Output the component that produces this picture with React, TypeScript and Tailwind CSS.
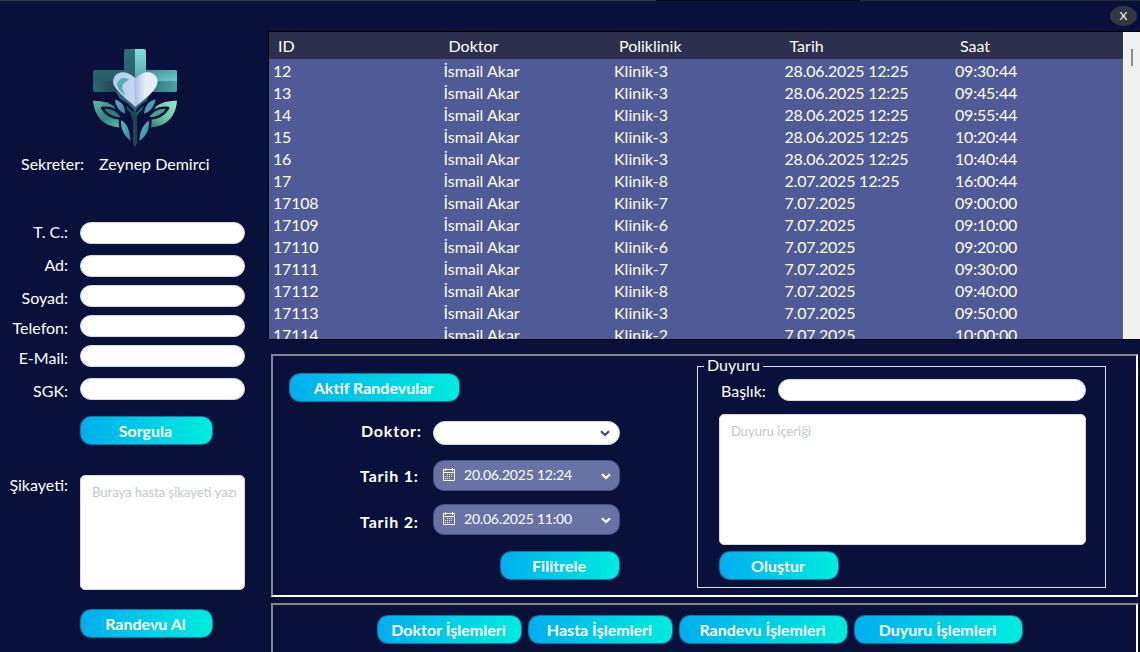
import React from "react";

const rows: string[][] = [
  ["12", "Klinik-3", "28.06.2025 12:25", "09:30:44"],
  ["13", "Klinik-3", "28.06.2025 12:25", "09:45:44"],
  ["14", "Klinik-3", "28.06.2025 12:25", "09:55:44"],
  ["15", "Klinik-3", "28.06.2025 12:25", "10:20:44"],
  ["16", "Klinik-3", "28.06.2025 12:25", "10:40:44"],
  ["17", "Klinik-8", "2.07.2025 12:25", "16:00:44"],
  ["17108", "Klinik-7", "7.07.2025", "09:00:00"],
  ["17109", "Klinik-6", "7.07.2025", "09:10:00"],
  ["17110", "Klinik-6", "7.07.2025", "09:20:00"],
  ["17111", "Klinik-7", "7.07.2025", "09:30:00"],
  ["17112", "Klinik-8", "7.07.2025", "09:40:00"],
  ["17113", "Klinik-3", "7.07.2025", "09:50:00"],
  ["17114", "Klinik-2", "7.07.2025", "10:00:00"],
];

const fields = [
  { label: "T. C.:", row: "", text: "-mt-[2px]" },
  { label: "Ad:", row: "mt-[11px]", text: "-mt-[2px]" },
  { label: "Soyad:", row: "mt-2", text: "mt-[4px]" },
  { label: "Telefon:", row: "mt-2", text: "mt-[4px]" },
  { label: "E-Mail:", row: "mt-2", text: "mt-[4px]" },
  { label: "SGK:", row: "mt-[11px]", text: "mt-[4px]" },
];

function Button({ className, children }: { className: string; children: React.ReactNode }) {
  return (
    <button
      className={`flex h-[29px] shrink-0 items-center justify-center rounded-[11px] border border-[#087a9c] bg-linear-to-r from-[#00adee] to-[#00ecde] bg-origin-border pr-[2px] text-[16px] font-bold whitespace-nowrap text-white ${className}`}
    >
      {children}
    </button>
  );
}

function Logo() {
  return (
    <svg width="110" height="115" viewBox="0 0 330 345" className="block">
      <defs>
        <linearGradient id="crossLeft" x1="0" y1="0" x2="0" y2="1">
          <stop offset="0" stopColor="#2d7078" />
          <stop offset="1" stopColor="#1d4350" />
        </linearGradient>
        <linearGradient id="crossRight" x1="0" y1="0" x2="0" y2="1">
          <stop offset="0" stopColor="#86ded8" />
          <stop offset="0.4" stopColor="#55aab1" />
          <stop offset="1" stopColor="#235663" />
        </linearGradient>
        <linearGradient id="arm" x1="0" y1="0" x2="1" y2="0">
          <stop offset="0" stopColor="#2b6870" />
          <stop offset="1" stopColor="#203e4c" />
        </linearGradient>
        <linearGradient id="armRight" x1="0" y1="0" x2="1" y2="1">
          <stop offset="0" stopColor="#438d98" />
          <stop offset="1" stopColor="#70cec9" />
        </linearGradient>
        <linearGradient id="armRightLow" x1="0" y1="0" x2="1" y2="0">
          <stop offset="0" stopColor="#2c6a75" />
          <stop offset="1" stopColor="#4ba3a8" />
        </linearGradient>
        <linearGradient id="heartFill" x1="0" y1="0" x2="1" y2="0">
          <stop offset="0" stopColor="#b3ccea" />
          <stop offset="0.46" stopColor="#c4d7f1" />
          <stop offset="0.5" stopColor="#acc2df" />
          <stop offset="0.72" stopColor="#e5edfb" />
          <stop offset="1" stopColor="#e5edfb" />
        </linearGradient>
        <linearGradient id="leafLeft" x1="0" y1="0" x2="1" y2="1">
          <stop offset="0" stopColor="#63b8a7" />
          <stop offset="0.5" stopColor="#35847f" />
          <stop offset="1" stopColor="#5ec5ae" />
        </linearGradient>
        <linearGradient id="leafRight" x1="1" y1="0" x2="0" y2="1">
          <stop offset="0" stopColor="#9ae8cc" />
          <stop offset="0.55" stopColor="#69bea2" />
          <stop offset="1" stopColor="#276d70" />
        </linearGradient>
        <linearGradient id="leafBlue" x1="0" y1="0" x2="1" y2="1">
          <stop offset="0" stopColor="#68b9cb" />
          <stop offset="1" stopColor="#367d96" />
        </linearGradient>
      </defs>
      <path d="M132 34q0-7 7-7h26v230l-14-38q-22-20-32-64h-74q-6 0-6-6v-53q0-6 6-6h87z" fill="url(#crossLeft)" />
      <path d="M165 27h26q7 0 7 7v56h86q7 0 7 7v53q0 6-7 6h-75q-14 50-35 65l-9 28z" fill="url(#crossRight)" />
      <path d="M39 123h82v33H45q-6 0-6-6z" fill="url(#arm)" />
      <path d="M198 90h86q7 0 7 7v27h-93z" fill="url(#armRight)" />
      <path d="M198 124h93v26q0 6-7 6h-86z" fill="url(#armRightLow)" />
      <path d="M106 155q24 40 54 55l6 20 7-20q20-12 39-55l-3 0-44 47-48-47z" fill="#2e6572" />
      <path d="M166 201C150 184 111 158 101 134C91 105 129 78 166 115C202 78 241 103 231 134C221 160 184 184 166 201Z" fill="url(#heartFill)" />
      <path d="M148 119C125 104 107 124 113 140Q119 157 137 164Q112 133 148 119Z" fill="#54aeb0" />
      <path d="M39 182Q80 181 105 200Q126 216 132 261Q111 265 85 255Q44 235 39 182Z" fill="url(#leafLeft)" />
      <path d="M291 182Q250 181 226 200Q204 216 198 261Q219 265 245 255Q287 235 291 182Z" fill="url(#leafRight)" />
      <path d="M111 176Q147 191 165 221Q183 191 220 176" fill="none" stroke="#09113a" strokeWidth="7" />
      <path d="M91 212Q151 223 157 305M239 212Q181 223 173 305" fill="none" stroke="#09113a" strokeWidth="8" />
      <g stroke="#09113a" strokeWidth="7" strokeLinejoin="round">
        <path d="M66 204Q106 197 129 236Q88 238 66 204Z" fill="#2f7d7c" />
        <path d="M101 174Q142 182 139 226Q103 216 101 174Z" fill="url(#leafBlue)" />
        <path d="M120 236Q154 247 155 310Q115 281 120 236Z" fill="url(#leafBlue)" />
        <path d="M265 204Q224 197 201 236Q243 238 265 204Z" fill="#4ba095" />
        <path d="M231 174Q191 179 188 226Q225 219 231 174Z" fill="url(#leafBlue)" />
        <path d="M211 236Q176 251 174 309Q214 288 211 236Z" fill="url(#leafBlue)" />
      </g>
      <path d="M159 214H171V310L165 322L159 309Z" fill="#1d4552" />
    </svg>
  );
}

function Chevron({ className }: { className: string }) {
  return (
    <svg width="10" height="7" viewBox="0 0 10 7" fill="none" stroke="currentColor" strokeWidth="2.2" className={className}>
      <path d="M1 1.2L5 5L9 1.2" />
    </svg>
  );
}

function Calendar() {
  return (
    <svg width="12" height="13" viewBox="0 0 12 13" fill="none" stroke="#fff" className="-mt-[2px] shrink-0">
      <path d="M.5 1.5h11v11H.5zM0 4.5h12M2.5 0v3M9.5 0v3" />
      <path d="M4 6.5h6M2 8.5h8M2 10.5h6" strokeDasharray="1 1" />
    </svg>
  );
}

function DatePicker({ value }: { value: string }) {
  return (
    <div className="flex h-[31px] w-[187px] items-center rounded-[11px] border border-[#46518a] bg-[#6872a5] pr-[8px] pl-[9px] text-white">
      <Calendar />
      <span className="-mt-[2px] ml-[9px] text-[14px] leading-[18px] tracking-[-0.2px]">{value}</span>
      <Chevron className="mt-[1px] ml-auto" />
    </div>
  );
}

const bevel = "border-2 border-t-[#85858a] border-l-[#85858a] border-r-white border-b-white";

export default function App() {
  return (
    <div className="flex h-[652px] w-[1140px] flex-col overflow-hidden bg-[#09113a] font-['Lato','Liberation_Sans',sans-serif] text-[16px] leading-[20px] text-white">
      <div className="flex h-px shrink-0 bg-[#343b50]">
        <div className="ml-[656px] w-[204px] bg-[#080910]" />
        <div className="flex-1 bg-[#292b30]" />
      </div>
      <div className="flex min-h-0 flex-1">
        <aside className="flex w-[268px] shrink-0 flex-col pt-[39px]">
          <div className="ml-20">
            <Logo />
          </div>
          <div className="-mt-px flex h-5 pl-[21px] whitespace-nowrap">
            <span className="w-[78px]">Sekreter:</span>
            <span>Zeynep Demirci</span>
          </div>
          <div className="mt-12 flex flex-col">
            {fields.map((f) => (
              <div key={f.label} className={`flex h-[22px] items-center ${f.row}`}>
                <label className={`w-[68px] text-right whitespace-nowrap ${f.text}`}>{f.label}</label>
                <input className="ml-3 h-[22px] w-[165px] rounded-full border border-[#d5dae2] bg-white px-2 text-black" />
              </div>
            ))}
          </div>
          <Button className="mt-[16px] ml-20 w-[133px]">Sorgula</Button>
          <div className="mt-[30px] flex h-[115px]">
            <label className="w-[68px] text-right whitespace-nowrap">Şikayeti:</label>
            <div className="ml-3 w-[165px] overflow-hidden rounded-[5px] border border-[#d5dae2] bg-white px-[11px] pt-[6px] text-[13px] whitespace-nowrap text-[#c1c8d0]">
              Buraya hasta şikayeti yazı
            </div>
          </div>
          <Button className="mt-[19px] ml-20 w-[133px]">Randevu Al</Button>
        </aside>

        <main className="flex w-[872px] shrink-0 flex-col">
          <div className="flex h-[30px] shrink-0 items-center justify-end pr-[3px]">
            <button className="h-[20px] w-[27px] rounded-[50%] bg-[#343842] text-[12px] leading-[20px]">X</button>
          </div>
          <div className="flex h-[309px] shrink-0 border-y border-l border-black">
            <div className="flex w-[854px] shrink-0 flex-col overflow-hidden bg-[#4f5b96]">
              <div className="grid h-[27px] shrink-0 grid-cols-[170.5px_170.5px_170.5px_170.5px_1fr] items-center bg-[#2c304d] pl-[9px]">
                <span>ID</span>
                <span>Doktor</span>
                <span>Poliklinik</span>
                <span>Tarih</span>
                <span>Saat</span>
              </div>
              {rows.map((r) => (
                <div key={r[0]} className="grid h-[22px] shrink-0 grid-cols-[170.5px_170.5px_170.5px_170.5px_1fr] pt-[2px] pl-[4px]">
                  <span className="tracking-[-0.2px]">{r[0]}</span>
                  <span>İsmail Akar</span>
                  <span>{r[1]}</span>
                  <span className="tracking-[-0.2px]">{r[2]}</span>
                  <span className="tracking-[-0.2px]">{r[3]}</span>
                </div>
              ))}
            </div>
            <div className="flex flex-1 justify-center border-l border-white bg-[#f0f0f0] pt-[17px]">
              <div className="h-[17px] w-[2px] bg-[#8a8a8a]" />
            </div>
          </div>

          <section className={`mt-[14px] ml-[3px] flex h-[243px] w-[867px] shrink-0 ${bevel}`}>
            <div className="flex w-[424px] flex-col pt-[17px]">
              <Button className="ml-4 w-[171px]">Aktif Randevular</Button>
              <div className="mt-[19px] ml-[88px] flex h-[23px] items-center">
                <label className="-mt-[3px] w-[72px] font-bold tracking-[0.8px]">Doktor:</label>
                <div className="flex h-[24px] w-[187px] items-center justify-end rounded-full border border-[#d5dae2] bg-white pr-[9px] text-[#3c5068]">
                  <Chevron className="mt-[2px]" />
                </div>
              </div>
              <div className="mt-[16px] ml-[87px] flex h-[31px]">
                <label className="mt-[6px] w-[73px] font-bold tracking-[0.8px]">Tarih 1:</label>
                <DatePicker value="20.06.2025 12:24" />
              </div>
              <div className="mt-[13px] ml-[87px] flex h-[31px]">
                <label className="mt-[8px] w-[73px] font-bold tracking-[0.8px]">Tarih 2:</label>
                <DatePicker value="20.06.2025 11:00" />
              </div>
              <Button className="mt-[16px] ml-[227px] w-[120px]">Filitrele</Button>
            </div>
            <fieldset className="h-[232px] w-[409px] border border-[#dfe1ea]">
              <legend className="ml-[6px] h-[20px] px-[3px] leading-[18px]">Duyuru</legend>
              <div className="mt-[3px] flex h-[22px] items-center pl-[23px]">
                <label className="mt-[1px] w-[57px]">Başlık:</label>
                <input className="h-[22px] w-[308px] rounded-full border border-[#d5dae2] bg-white px-2 text-black" />
              </div>
              <div className="mt-[13px] ml-[21px] h-[131px] w-[367px] rounded-[5px] border border-[#d5dae2] bg-white px-[11px] pt-[6px] text-[13px] text-[#c1c8d0]">
                Duyuru içeriği
              </div>
              <Button className="mt-[6px] ml-[21px] w-[120px]">Oluştur</Button>
            </fieldset>
          </section>

          <nav className={`mt-[6px] ml-[3px] flex h-[70px] w-[867px] shrink-0 gap-[6px] pt-[10px] pl-[104px] ${bevel}`}>
            <Button className="w-[145px]">Doktor İşlemleri</Button>
            <Button className="w-[145px]">Hasta İşlemleri</Button>
            <Button className="w-[169px]">Randevu İşlemleri</Button>
            <Button className="w-[169px]">Duyuru İşlemleri</Button>
          </nav>
        </main>
      </div>
    </div>
  );
}
